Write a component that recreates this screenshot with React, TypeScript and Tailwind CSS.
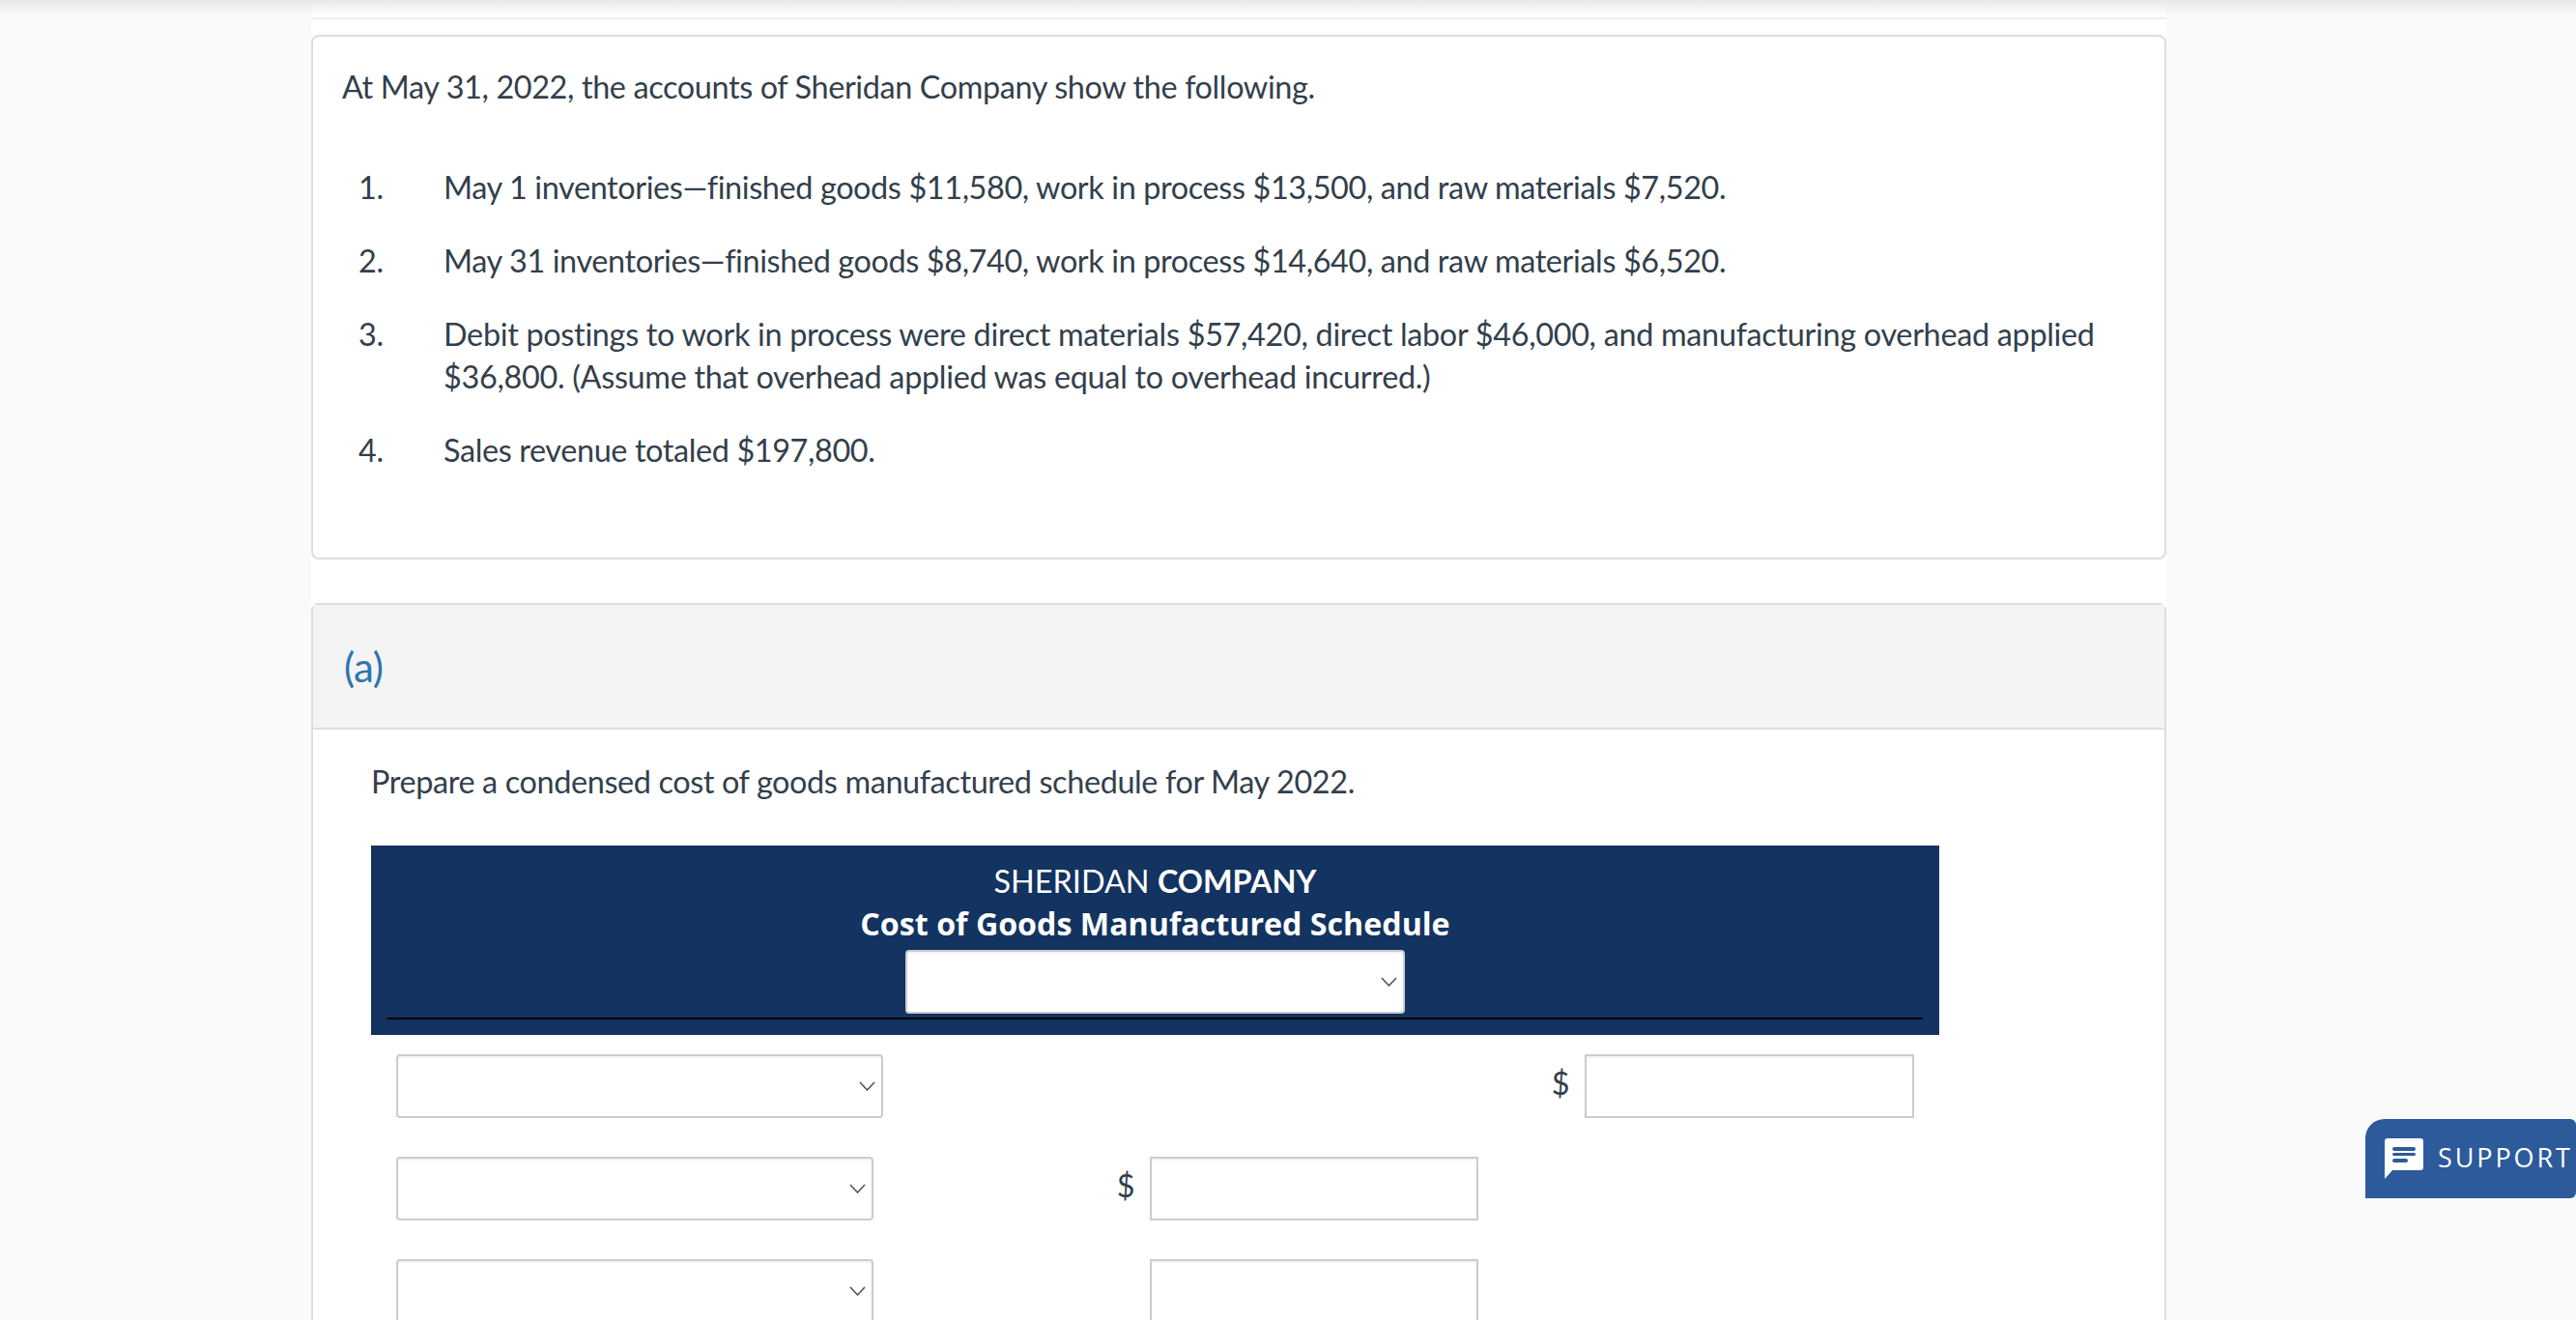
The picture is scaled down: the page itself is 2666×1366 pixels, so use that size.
import { ReactNode } from "react";

const items: ReactNode[] = [
  "May 1 inventories—finished goods $11,580, work in process $13,500, and raw materials $7,520.",
  "May 31 inventories—finished goods $8,740, work in process $14,640, and raw materials $6,520.",
  <span className="tracking-[-0.31px]">
    Debit postings to work in process were direct materials $57,420, direct labor $46,000, and manufacturing overhead applied
    <br />
    $36,800. (Assume that overhead applied was equal to overhead incurred.)
  </span>,
  "Sales revenue totaled $197,800.",
];

function Select({ className }: { className: string }) {
  return (
    <div className={`relative h-[66px] ${className}`}>
      <select className="block h-full w-full appearance-none rounded-[4px] border-2 border-[#cccccc] bg-white shadow-[inset_0_2px_2px_rgba(0,0,0,0.05)]" />
      <svg className="absolute right-[8px] top-[28px] pointer-events-none" width="17" height="10" viewBox="0 0 17 10" fill="none">
        <path d="M1 1l7.5 8L16 1" stroke="#555555" strokeWidth="1.6" />
      </svg>
    </div>
  );
}

function Amount() {
  return (
    <input
      type="text"
      className="block h-[66px] w-full border-2 border-[#cccccc] bg-white shadow-[inset_0_2px_2px_rgba(0,0,0,0.05)]"
    />
  );
}

function Row({ selectWidth, col, dollar = true }: { selectWidth: string; col: 1 | 2; dollar?: boolean }) {
  const sign = dollar ? <span className="-mt-[6px] pr-[10px] text-center">$</span> : <span />;
  return (
    <div className="grid grid-cols-[740px_40px_340px_70px_40px_341px] items-center">
      <Select className={selectWidth} />
      {col === 1 ? (
        <>
          {sign}
          <Amount />
          <span />
          <span />
          <span />
        </>
      ) : (
        <>
          <span />
          <span />
          <span />
          {sign}
          <Amount />
        </>
      )}
    </div>
  );
}

export default function App() {
  return (
    <div className="relative h-[1366px] overflow-hidden bg-[#fafafa] font-['Lato',sans-serif] text-[32.4px] leading-[44px] tracking-[-0.38px] text-[#333f4c]">
      <div className="absolute inset-x-0 top-0 h-[16px] bg-gradient-to-b from-[#e8e8e8] to-transparent" />

      <main className="ml-[322px] w-[1920px] bg-white pt-[18px]">
        <div className="h-[2px] bg-[#eeeeee]" />

        <section className="mt-[16px] h-[543px] rounded-[8px] border-2 border-[#dddddd] px-[30px] pt-[30px]">
          <p>At May 31, 2022, the accounts of Sheridan Company show the following.</p>
          <ol className="mt-[60px] flex flex-col gap-[32px]">
            {items.map((text, i) => (
              <li key={i} className="flex">
                <span className="w-[105px] shrink-0 pl-[17px]">{i + 1}.</span>
                <span>{text}</span>
              </li>
            ))}
          </ol>
        </section>

        <section className="mt-[45px] rounded-t-[8px] border-x-2 border-t-2 border-[#dddddd]">
          <div className="flex h-[129px] items-center border-b-2 border-[#dddddd] bg-[#f4f4f4] pl-[32px]">
            <h2 className="text-[42px] text-[#2e75ae]">(a)</h2>
          </div>
          <div className="pl-[60px] pt-[32px]">
            <p>Prepare a condensed cost of goods manufactured schedule for May 2022.</p>

            <div className="mt-[44px] w-[1623px]">
              <div className="h-[196px] bg-[#133360] px-[17px] pt-[15px] text-center tracking-normal text-white">
                <p>
                  SHERIDAN <strong className="font-bold">COMPANY</strong>
                </p>
                <p className="font-['Open_Sans',sans-serif] text-[32.2px] font-bold">Cost of Goods Manufactured Schedule</p>
                <div className="mt-[5px] border-b-2 border-black pb-[4px]">
                  <Select className="mx-auto w-[517px]" />
                </div>
              </div>

              <div className="flex flex-col gap-[40px] pl-[26px] pt-[20px]">
                <Row selectWidth="w-[504px]" col={2} />
                <Row selectWidth="w-[494px]" col={1} />
                <Row selectWidth="w-[494px]" col={1} dollar={false} />
              </div>
            </div>
          </div>
        </section>
      </main>

      <button className="absolute right-0 top-[1158px] flex h-[82px] w-[218px] items-center rounded-tl-[20px] rounded-r-[6px] bg-[#2d5a9b] pl-[20px] font-['Open_Sans',sans-serif] text-[27px] tracking-[2.9px] text-white">
        <svg width="40" height="42" viewBox="0 0 40 42" className="shrink-0">
          <path d="M3 0h34a3 3 0 0 1 3 3v27a3 3 0 0 1-3 3H8l-8 9V3a3 3 0 0 1 3-3z" fill="#ffffff" />
          <rect x="8" y="9" width="24" height="4" rx="2" fill="#2d5a9b" />
          <rect x="8" y="15" width="24" height="3" rx="1.5" fill="#2d5a9b" />
          <rect x="8" y="21" width="16" height="4" rx="2" fill="#2d5a9b" />
        </svg>
        <span className="ml-[15px] -mt-[2px] whitespace-nowrap">SUPPORT</span>
      </button>
    </div>
  );
}
